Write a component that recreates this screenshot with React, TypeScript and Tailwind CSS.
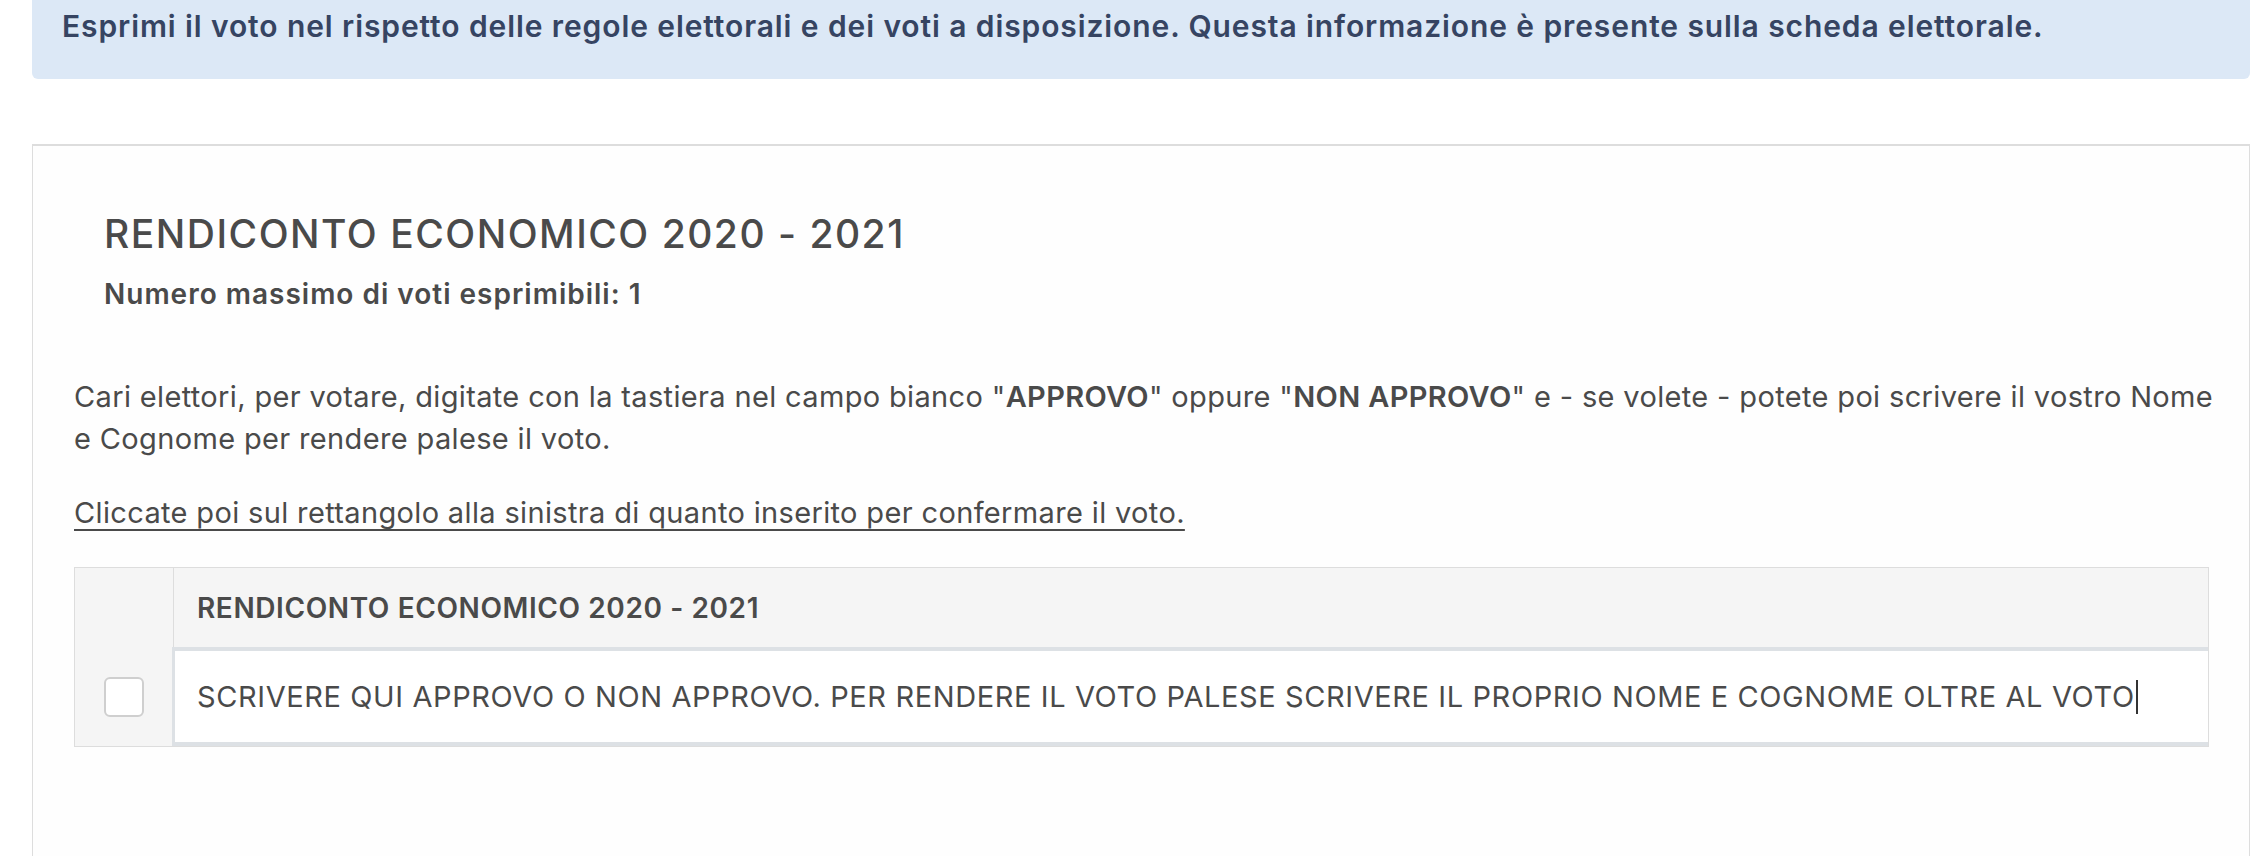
export default function App() {
  return (
    <div className="h-[856px] overflow-hidden bg-white pl-[32px] pr-[2px] font-[family-name:Inter,sans-serif] text-[#4a4a4a]">
      {/* avviso */}
      <div className="rounded-b-md bg-[#dce8f6] px-[30px] pt-[6px] pb-[33px]">
        <p className="whitespace-nowrap text-[30px] leading-[40px] font-semibold tracking-[0.9px] text-[#364462]">
          Esprimi il voto nel rispetto delle regole elettorali e dei voti a disposizione. Questa informazione è presente sulla scheda elettorale.
        </p>
      </div>

      {/* scheda */}
      <div className="mt-[65px] border border-t-2 border-[#dddddd] bg-[#fefefe] pt-[64px] pl-[41px] pr-[40px] pb-[140px]">
        <h2 className="ml-[30px] text-[39px] leading-[47px] font-medium tracking-[1.5px] whitespace-nowrap">
          RENDICONTO ECONOMICO 2020 - 2021
        </h2>
        <p className="ml-[30px] mt-[22px] text-[28px] leading-[31px] font-semibold tracking-[1px] whitespace-nowrap">
          Numero massimo di voti esprimibili: 1
        </p>

        <p className="mt-[66px] text-[29px] leading-[42px] tracking-[0.35px] whitespace-nowrap">
          Cari elettori, per votare, digitate con la tastiera nel campo bianco "<b className="font-semibold">APPROVO</b>" oppure "<b className="font-semibold">NON APPROVO</b>" e - se volete - potete poi scrivere il vostro Nome
          <br />
          e Cognome per rendere palese il voto.
        </p>
        <p className="mt-[32px] text-[29px] leading-[42px] tracking-[0.35px] underline underline-offset-[6px] decoration-[1.5px] whitespace-nowrap">
          Cliccate poi sul rettangolo alla sinistra di quanto inserito per confermare il voto.
        </p>

        {/* tabella voto */}
        <div className="mt-[33px] border border-[#dddddd]">
          <div className="flex h-[79px] bg-[#f5f5f5]">
            <div className="w-[99px] shrink-0 border-r border-[#dddddd]" />
            <div className="flex items-center pl-[23px] text-[28px] font-semibold tracking-[0.6px] whitespace-nowrap">
              RENDICONTO ECONOMICO 2020 - 2021
            </div>
          </div>
          <div className="flex h-[99px]">
            <div className="flex w-[97px] shrink-0 items-center justify-center bg-[#f5f5f5]">
              <div className="h-[40px] w-[40px] rounded-[6px] border-2 border-[#cfcfcf] bg-white" />
            </div>
            <div className="flex flex-1 items-center border-y-4 border-l-[3px] border-[#dde1e5] bg-white pl-[22px] text-[29px] tracking-[0.6px] whitespace-nowrap">
              SCRIVERE QUI APPROVO O NON APPROVO. PER RENDERE IL VOTO PALESE SCRIVERE IL PROPRIO NOME E COGNOME OLTRE AL VOTO
              <span className="ml-[1px] inline-block h-[34px] w-[2px] bg-[#333333]" />
            </div>
          </div>
        </div>
      </div>
    </div>
  );
}
